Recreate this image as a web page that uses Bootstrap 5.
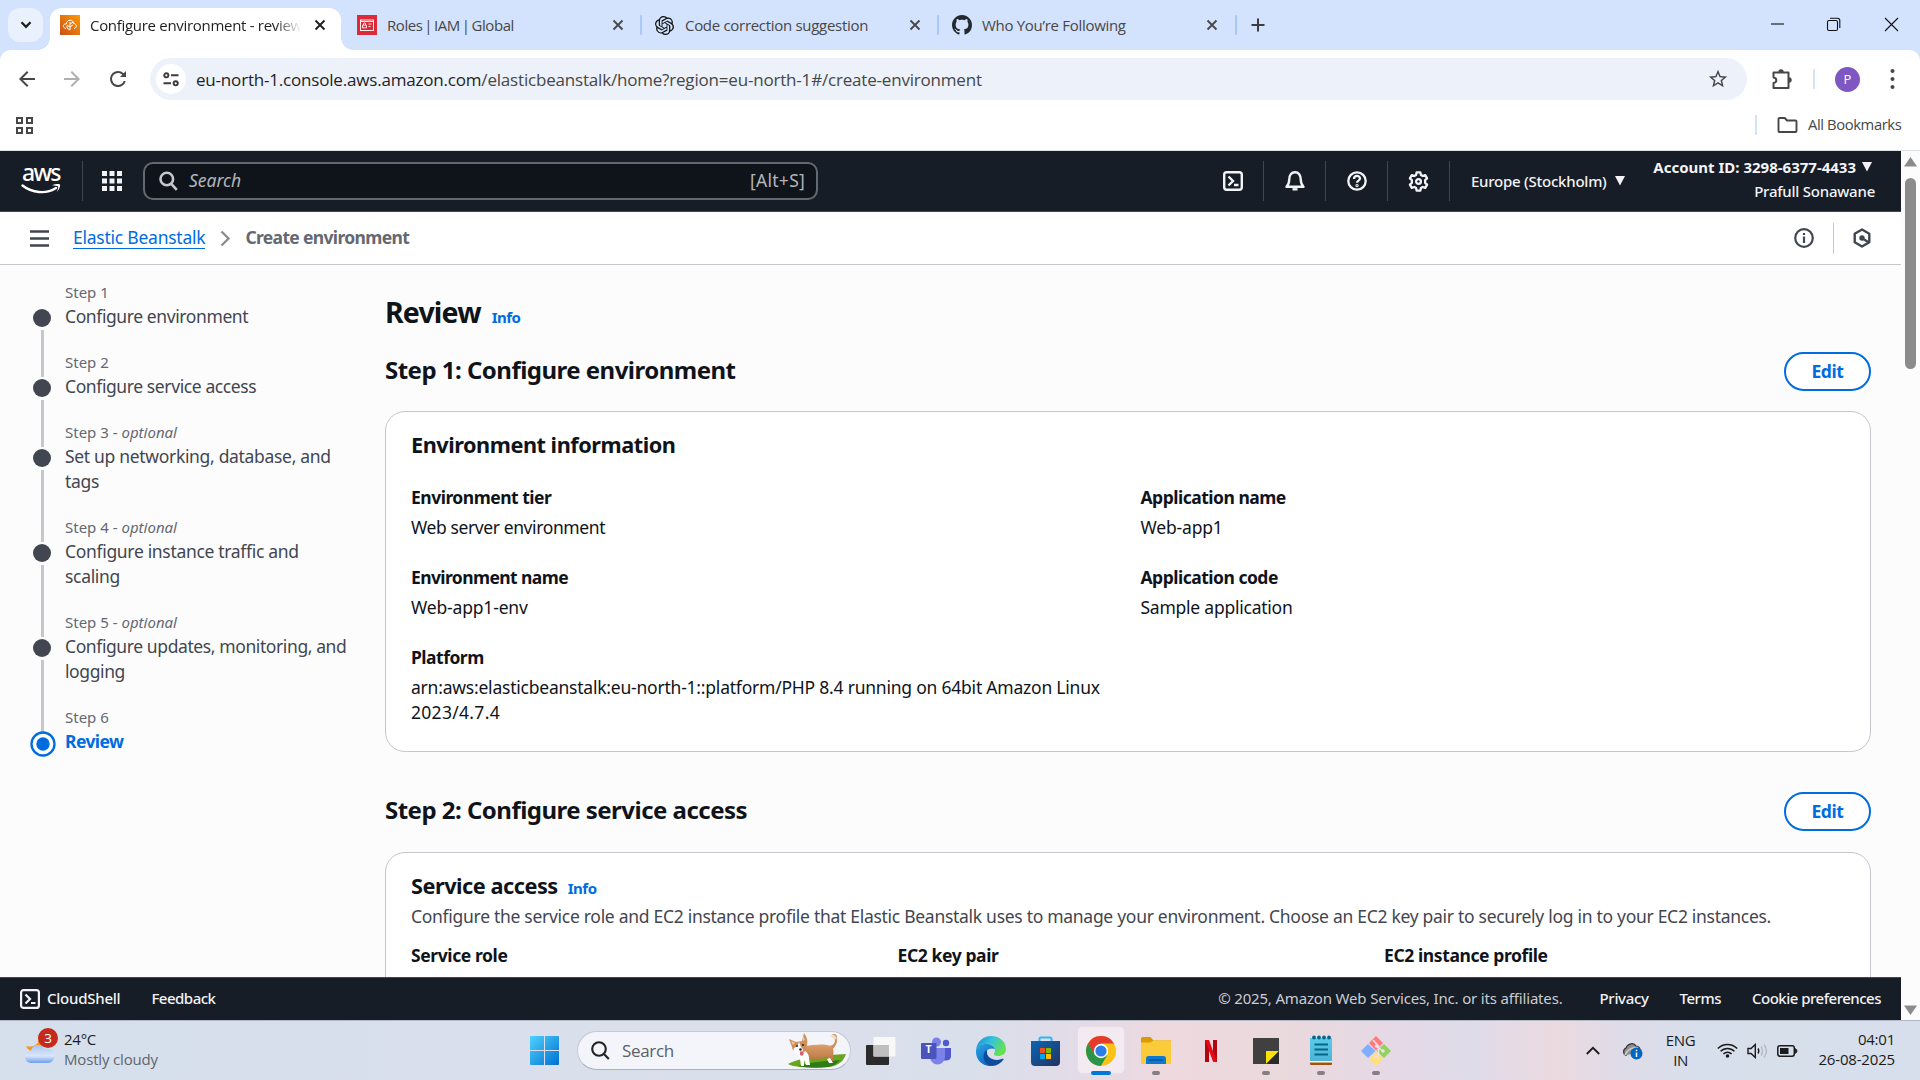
<!DOCTYPE html>
<html lang="en">
<head>
<meta charset="utf-8">
<title>Configure environment - review</title>
<link href="https://cdn.jsdelivr.net/npm/bootstrap@5.3.0/dist/css/bootstrap.min.css" rel="stylesheet">
<style>
html,body{height:1080px;overflow:hidden}
body{font-family:"Noto Sans","Open Sans",sans-serif;font-size:17.5px;line-height:25px;color:#0f141a;background:#fcfcfd;width:1920px}
svg{display:block;flex:none}
.seg{font-family:"Open Sans","Noto Sans",sans-serif;white-space:nowrap}
.nw{white-space:nowrap}
/* tracking steps */
.k1{letter-spacing:-.17px}.k2{letter-spacing:-.24px}.k3{letter-spacing:-.32px}.k4{letter-spacing:-.4px}.k5{letter-spacing:-.5px}.k6{letter-spacing:-.6px}
/* browser chrome */
.tabstrip{height:50px;background:#d3e3fd;flex:none}
.tabsearch{width:35px;height:34px;margin:8px 7px 8px 8px;border-radius:12px;background:#e9f1fe}
.tabitem{height:34px;margin-top:8px;font-size:15px;line-height:34px;color:#474747;flex:none;position:relative;letter-spacing:-.3px}
.tabitem.cur{width:291px;height:42px;background:#fff;border-radius:12px 12px 0 0;color:#1f1f1f;padding-bottom:8px}
.tabitem.cur::before,.tabitem.cur::after{content:"";position:absolute;bottom:0;width:12px;height:12px}
.tabitem.cur::before{left:-12px;background:radial-gradient(circle at 0 0,#d3e3fd 11.5px,#fff 12px)}
.tabitem.cur::after{right:-12px;background:radial-gradient(circle at 100% 0,#d3e3fd 11.5px,#fff 12px)}
.fade-t{width:212px;overflow:hidden;-webkit-mask-image:linear-gradient(90deg,#000 185px,transparent 211px)}
.tsep{width:2px;height:20px;background:#a8c7fa;border-radius:1px;flex:none}
.toolbar{height:50px;background:#fff;border-radius:11px 11px 0 0;flex:none;padding-top:8px}
.toolwrap{background:#d3e3fd;flex:none}
.omni{width:1597px;height:42px;border-radius:21px;background:#ecf1fa;margin-left:20px;padding-left:6px}
.omni .site{width:30px;height:30px;border-radius:50%;background:#fff;flex:none}
.url{font-size:17px;color:#1f1f1f;margin-left:10px;letter-spacing:-.19px}
.url span{color:#474747}
.avatar{width:25px;height:25px;border-radius:50%;background:#7e57c2;color:#fff;font-size:13px;line-height:25px;text-align:center;flex:none}
.bmbar{height:51px;border-bottom:1px solid #dadfe4;background:#fff;flex:none}
.vsep{width:2px;height:20px;background:#d3e3fd;flex:none}
/* page */
.viewport{height:869px;flex:none}
.pagecol{width:1901px}
.awsnav{height:61px;background:#161d26;border-bottom:1px solid #424650;color:#f3f3f7;flex:none}
.nsep{width:1px;height:40px;background:#424650;flex:none}
.awsword{font-size:23px;line-height:18px;height:18px;color:#fff;letter-spacing:-1.7px;font-weight:500}
.searchbox{width:675px;height:38px;border:2px solid #656871;border-radius:10px;background:#0f141a;color:#b4b4bb;margin-left:21px;padding:0 11px 0 14px}
.searchbox span,.searchbox em{padding-bottom:1px}
.nico{width:61px;height:60px;flex:none}
.nav15{font-size:15px;line-height:24px}
.med{font-weight:500}
.crumbs{height:53px;background:#fff;border-bottom:1px solid #c6c6cd;flex:none}
.crumbs a{color:#006ce0;text-decoration:none;border-bottom:1px solid #006ce0;line-height:22px;margin-top:-1px}
.crumbs b{color:#656871;padding-bottom:2px;letter-spacing:-.66px}
.steps{width:385px;padding:18px 0 0 29px}
.stepitem{padding-left:36px;position:relative;padding-bottom:25px;color:#424650}
.stepitem small{display:block;font-size:15px;line-height:20px;color:#656871;margin-top:-1px;margin-bottom:1px}
.stepitem .dot{position:absolute;left:4px;top:27px;width:18px;height:18px;border-radius:50%;background:#424650}
.stepitem .line{position:absolute;left:12px;top:48px;bottom:-24px;width:3px;background:#c6c6cd}
.stepitem .ring{position:absolute;left:.5px;top:23.5px}
.stepitem .ttl{display:block;line-height:25px;padding-top:1px;margin-bottom:-1px}
.review{width:1486px}
.review h1{font-size:28.5px;line-height:36px;font-weight:700;margin:0;letter-spacing:-.85px}
.review h2{font-size:24px;line-height:30px;font-weight:700;margin:0;padding-bottom:3px;letter-spacing:-.52px}
.review h3{font-size:21.7px;line-height:28px;font-weight:700;margin:0;letter-spacing:-.47px}
.info{font-size:15px;font-weight:700;color:#006ce0;text-decoration:none;letter-spacing:-.5px}
.btn-edit{width:87px;height:39px;border:2px solid #006ce0;border-radius:20px;color:#006ce0;font-weight:700;font-size:17.5px;line-height:33px;padding:0;background:#fff;letter-spacing:-.4px}
.box{border:1px solid #c6c6cd;border-radius:20px;background:#fff;padding:19px 25px 25px}
.box dt{line-height:25px;font-weight:700;margin-bottom:5px}
.box dd{line-height:25px;margin-bottom:25px}
.c2{width:729.5px}.c3{width:486.5px}
.awsfoot{height:43px;background:#161d26;border-top:1px solid #424650;color:#f3f3f7;font-size:15px;flex:none}
.awsfoot span{padding-bottom:2px}
.sbar{width:19px;background:#fcfcfc;padding:6px 0 5px;flex:none}
.sthumb{width:11px;height:191px;border-radius:6px;background:#8b8b8b;margin-top:11px}
/* taskbar */
.taskbar{height:60px;border-top:1px solid #b3b8c5;font-size:15px;line-height:20px;color:#1b1b1b;flex:none;
background:linear-gradient(90deg,#d5e0ec 0,#d9dfec 400px,#dadfec 560px,#dbdfec 850px,#d8e0eb 960px,#e3dbe8 1080px,#eed9dd 1170px,#ead9dd 1280px,#e6d9e6 1390px,#dfdcea 1470px,#ebdadf 1555px,#dfdce8 1620px,#d8dfec 1700px,#d6dfeb 1920px)}
.tsearch{width:274px;height:39px;border-radius:20px;background:#f3f5fa;border:1px solid #c3c9d6;border-bottom-color:#a9afc0;font-size:17px;color:#5c5f66;padding-left:13px}
.tk{width:55px;height:59px;flex:none;position:relative}
.tk.on::before{content:"";position:absolute;left:3.5px;top:5px;width:48px;height:48px;border-radius:5px;background:#f3ebf1;border:1px solid #e6dde6}
.tk svg{position:relative}
.tk .run{position:absolute;left:23.5px;bottom:5px;width:8px;height:4px;border-radius:2px;background:#877e85}
.tk .run.wide{width:20px;left:17.5px;background:#0078d4}
.tk .tlet{position:absolute;left:16.5px;top:20px;width:8px;color:#fff;font-size:10.5px;line-height:16px;text-align:center}
.wx{position:relative;width:31px;height:40px;margin:-9px 0 0 24px}
.wx .cnt{position:absolute;left:14px;top:2px;width:20px;height:20px;border-radius:50%;background:#c42b1c;color:#fff;font-size:13.5px;line-height:20px;text-align:center}
</style>
<script src="https://cdn.jsdelivr.net/npm/bootstrap@5.3.0/dist/js/bootstrap.bundle.min.js"></script>
</head>
<body class="d-flex flex-column">

<header class="tabstrip d-flex">
  <div class="tabsearch d-flex align-items-center justify-content-center">
    <svg width="12" height="8" viewBox="0 0 12 8" fill="none" stroke="#1f1f1f" stroke-width="2.3"><path d="M1.5 1.3 6 5.8l4.5-4.5"/></svg>
  </div>
  <div class="tabitem cur seg d-flex align-items-center">
    <svg style="margin:0 10px" width="20" height="20" viewBox="0 0 20 20"><defs><linearGradient id="eb" x1="0" y1="1" x2="1" y2="0"><stop stop-color="#c8511b"/><stop offset="1" stop-color="#f90"/></linearGradient></defs><rect width="20" height="20" fill="url(#eb)"/><g fill="none" stroke="#fff" stroke-width="1"><path d="M6 13.500c-4-.6-3.300-5 .3-4.500.5-5 7-5 7.400-.5 3.600.2 3.300 4.800.3 5"/><path d="M7 10.500v2.500l3 2v-8M13 10l-3 2M10 9l3-1.800M7 10l3 2"/></g></svg>
    <span class="fade-t">Configure environment - review</span>
    <svg style="margin-left:12px" width="12" height="12" viewBox="0 0 12 12" stroke="#1f1f1f" stroke-width="1.900"><path d="M1.500 1.500l9 9M10.500 1.500l-9 9"/></svg>
  </div>
  <div class="tabitem seg d-flex align-items-center" style="width:300px">
    <svg style="margin:0 10px 0 16px" width="20" height="20" viewBox="0 0 20 20"><rect width="20" height="20" fill="#dd2a38"/><g fill="none" stroke="#fff" stroke-width=".9"><rect x="3.500" y="5" width="13" height="10.500"/><path d="M5.500 12.800h4v-2.600h-4zM6.500 10V8.900c0-1.300 2-1.300 2 0V10M11.500 9h3M11.500 11.500h2M3.500 6.500h13"/></g></svg>
    <span style="width:225px;word-spacing:-1.500px;letter-spacing:-.45px">Roles | IAM | Global</span>
    <svg width="12" height="12" viewBox="0 0 12 12" stroke="#474747" stroke-width="1.800"><path d="M1.500 1.500l9 9M10.500 1.500l-9 9"/></svg>
    <i class="tsep ms-auto" style="margin-right:-1px"></i>
  </div>
  <div class="tabitem seg d-flex align-items-center" style="width:299px">
    <svg style="margin:0 11px 0 14px" width="19" height="19" viewBox="0 0 24 24"><path fill="#111" d="M22.2819 9.8211a5.9847 5.9847 0 0 0-.5157-4.9108 6.0462 6.0462 0 0 0-6.5098-2.9A6.0651 6.0651 0 0 0 4.9807 4.1818a5.9847 5.9847 0 0 0-3.9977 2.9 6.0462 6.0462 0 0 0 .7427 7.0966 5.98 5.98 0 0 0 .511 4.9107 6.051 6.051 0 0 0 6.5146 2.9001A5.9847 5.9847 0 0 0 13.2599 24a6.0557 6.0557 0 0 0 5.7718-4.2058 5.9894 5.9894 0 0 0 3.9977-2.9001 6.0557 6.0557 0 0 0-.7475-7.0729zm-9.022 12.6081a4.4755 4.4755 0 0 1-2.8764-1.0408l.1419-.0804 4.7783-2.7582a.7948.7948 0 0 0 .3927-.6813v-6.7369l2.02 1.1686a.071.071 0 0 1 .038.052v5.5826a4.504 4.504 0 0 1-4.4945 4.4944zm-9.6607-4.1254a4.4708 4.4708 0 0 1-.5346-3.0137l.142.0852 4.783 2.7582a.7712.7712 0 0 0 .7806 0l5.8428-3.3685v2.3324a.0804.0804 0 0 1-.0332.0615L9.74 19.9502a4.4992 4.4992 0 0 1-6.1408-1.6464zM2.3408 7.8956a4.485 4.485 0 0 1 2.3655-1.9728V11.6a.7664.7664 0 0 0 .3879.6765l5.8144 3.3543-2.0201 1.1685a.0757.0757 0 0 1-.071 0l-4.8303-2.7865A4.504 4.504 0 0 1 2.3408 7.872zm16.5963 3.8558L13.1038 8.364 15.1192 7.2a.0757.0757 0 0 1 .071 0l4.8303 2.7913a4.4944 4.4944 0 0 1-.6765 8.1042v-5.6772a.79.79 0 0 0-.407-.667zm2.0107-3.0231l-.142-.0852-4.7735-2.7818a.7759.7759 0 0 0-.7854 0L9.409 9.2297V6.8974a.0662.0662 0 0 1 .0284-.0615l4.8303-2.7866a4.4992 4.4992 0 0 1 6.6802 4.66zM8.3065 12.863l-2.02-1.1638a.0804.0804 0 0 1-.038-.0567V6.0742a4.4992 4.4992 0 0 1 7.3757-3.4537l-.142.0805L8.704 5.459a.7948.7948 0 0 0-.3927.6813zm1.0976-2.3654l2.602-1.4998 2.6069 1.4998v2.9994l-2.5974 1.4997-2.6067-1.4997Z"/></svg>
    <span style="width:224px">Code correction suggestion</span>
    <svg width="12" height="12" viewBox="0 0 12 12" stroke="#474747" stroke-width="1.800"><path d="M1.500 1.500l9 9M10.500 1.500l-9 9"/></svg>
    <i class="tsep ms-auto" style="margin-right:1px"></i>
  </div>
  <div class="tabitem seg d-flex align-items-center" style="width:297px">
    <svg style="margin:0 10px 0 12px" width="20" height="20" viewBox="0 0 16 16"><path fill="#24292f" d="M8 0C3.580 0 0 3.580 0 8c0 3.540 2.290 6.530 5.470 7.590.4.070.55-.17.55-.38 0-.19-.01-.82-.01-1.490-2.010.37-2.530-.49-2.690-.94-.09-.23-.48-.94-.82-1.130-.28-.15-.68-.52-.01-.53.63-.01 1.080.58 1.230.82.72 1.210 1.870.87 2.330.66.07-.52.28-.87.51-1.070-1.780-.2-3.640-.89-3.640-3.950 0-.87.31-1.590.82-2.150-.08-.2-.36-1.020.08-2.120 0 0 .67-.21 2.200.82.64-.18 1.320-.27 2-.27.68 0 1.360.09 2 .27 1.530-1.040 2.200-.82 2.200-.82.44 1.100.16 1.920.08 2.120.51.56.82 1.270.82 2.150 0 3.070-1.870 3.750-3.650 3.950.29.25.54.73.54 1.480 0 1.070-.01 1.930-.01 2.200 0 .21.15.46.55.38A8.010 8.010 0 0 0 16 8c0-4.420-3.580-8-8-8z"/></svg>
    <span style="width:224px">Who You’re Following</span>
    <svg width="12" height="12" viewBox="0 0 12 12" stroke="#474747" stroke-width="1.800"><path d="M1.500 1.500l9 9M10.500 1.500l-9 9"/></svg>
    <i class="tsep ms-auto"></i>
  </div>
  <svg style="margin:18px 0 0 14px" width="14" height="14" viewBox="0 0 14 14" stroke="#3c3c3c" stroke-width="2"><path d="M7 .5v13M.5 7h13"/></svg>
  <svg class="ms-auto" style="margin:17px 21px 0 0" width="128" height="15" viewBox="0 0 128 15" fill="none" stroke="#111" stroke-width="1.100"><path d="M0 7h13"/><rect x="56.500" y="3.500" width="10" height="10" rx="1.500"/><path d="M59 1.300h7.500a2.300 2.300 0 0 1 2.300 2.300V11"/><path d="M114 1l13 13M127 1l-13 13"/></svg>
</header>

<div class="toolwrap"><div class="toolbar d-flex align-items-center">
  <svg style="margin-left:15px" width="24" height="24" viewBox="0 0 24 24" fill="#474747"><path d="M20 11H7.830l5.590-5.590L12 4l-8 8 8 8 1.410-1.410L7.830 13H20v-2z"/></svg>
  <svg style="margin-left:21px" width="24" height="24" viewBox="0 0 24 24" fill="#b0b0b0"><path d="M4 11h12.170l-5.590-5.590L12 4l8 8-8 8-1.410-1.410L16.170 13H4v-2z"/></svg>
  <svg style="margin-left:22px" width="24" height="24" viewBox="0 0 24 24" fill="#474747"><path d="M17.650 6.350A7.958 7.958 0 0 0 12 4a8 8 0 1 0 7.730 10h-2.080A6 6 0 1 1 12 6c1.660 0 3.140.69 4.220 1.780L14 10h6V4l-2.350 2.350z"/></svg>
  <div class="omni d-flex align-items-center seg">
    <div class="site d-flex align-items-center justify-content-center"><svg width="16" height="15" viewBox="0 0 16 15" fill="none" stroke="#3c3c3c" stroke-width="1.900"><circle cx="3.300" cy="3.300" r="2.100"/><path d="M8 3.300h7.500M.5 11.300H8"/><circle cx="12.700" cy="11.300" r="2.100"/></svg></div>
    <div class="url">eu-north-1.console.aws.amazon.com<span>/elasticbeanstalk/home?region=eu-north-1#/create-environment</span></div>
    <svg class="ms-auto" style="margin-right:18px" width="22" height="22" viewBox="0 0 24 24" fill="#474747"><path d="M22 9.240l-7.190-.62L12 2 9.190 8.630 2 9.240l5.460 4.730L5.820 21 12 17.270 18.180 21l-1.630-7.030L22 9.240zM12 15.400l-3.760 2.270 1-4.280-3.320-2.880 4.380-.38L12 6.100l1.710 4.040 4.380.38-3.320 2.880 1 4.280L12 15.400z"/></svg>
  </div>
  <svg style="margin-left:24px" width="22" height="22" viewBox="0 0 22 22"><path fill="none" stroke="#474747" stroke-width="2" stroke-linejoin="round" d="M2.500 4.500h15v15.500h-15v-5c3.800-.5 3.800-5 0-5.500z"/><path fill="#474747" d="M7.300 4a2.700 2.700 0 0 1 5.400 0zM18 9.300a2.700 2.700 0 0 1 0 5.400z"/></svg>
  <i class="vsep" style="margin-left:20px"></i>
  <div class="avatar seg" style="margin-left:20px">P</div>
  <svg style="margin-left:30px" width="5" height="22" viewBox="0 0 5 22" fill="#474747"><circle cx="2.500" cy="3" r="2"/><circle cx="2.500" cy="11" r="2"/><circle cx="2.500" cy="19" r="2"/></svg>
</div></div>

<div class="bmbar d-flex align-items-center seg">
  <svg style="margin-left:15px" width="19" height="19" viewBox="0 0 19 19" fill="none" stroke="#474747" stroke-width="2"><path d="M2 2h5v5H2zM12 2h5v5h-5zM2 12h5v5H2zM12 12h5v5h-5z"/></svg>
  <i class="vsep ms-auto"></i>
  <svg style="margin-left:20px" width="21" height="18" viewBox="0 0 21 18" fill="none" stroke="#474747" stroke-width="1.900"><path d="M1.500 3a1 1 0 0 1 1-1h5.300l2.200 2.500h8.500a1 1 0 0 1 1 1V15a1 1 0 0 1-1 1h-16a1 1 0 0 1-1-1z"/></svg>
  <span class="k4" style="font-size:14.800px;color:#474747;margin-left:10px;width:112px;padding-bottom:2px">All Bookmarks</span>
</div>

<div class="viewport d-flex">
 <div class="pagecol d-flex flex-column">
  <nav class="awsnav d-flex align-items-center">
    <div style="width:82px;padding:0 0 4px 22px">
      <div class="awsword">aws</div>
      <svg style="margin:2px 0 0 -1px" width="40" height="12" viewBox="0 0 40 12"><path d="M1.500 2.500C11 10 25 11.500 35 5" fill="none" stroke="#fff" stroke-width="2.400" stroke-linecap="round"/><path d="M31 2.200c3-1.400 7.500-1.500 8-.7s-.5 5-3 7.300c.8-2.500 1.600-4.600 1-5.400s-3.500-.8-6-1.200z" fill="#fff"/></svg>
    </div>
    <i class="nsep"></i>
    <svg style="margin-left:19px" width="20" height="20" viewBox="0 0 20 20" fill="#f3f3f7"><path d="M0 0h5v5H0zM7.500 0h5v5h-5zM15 0h5v5h-5zM0 7.500h5v5H0zM7.500 7.500h5v5h-5zM15 7.500h5v5h-5zM0 15h5v5H0zM7.500 15h5v5h-5zM15 15h5v5h-5z"/></svg>
    <div class="searchbox d-flex align-items-center nw">
      <svg width="19" height="20" viewBox="0 0 19 20" fill="none" stroke="#c6c6cd" stroke-width="2.600"><circle cx="7.800" cy="8" r="6.300"/><path d="M12.300 12.800l5.500 6"/></svg>
      <em style="margin-left:11px">Search</em>
      <span class="ms-auto" style="letter-spacing:.25px">[Alt+S]</span>
    </div>
    <div class="d-flex align-items-center ms-auto">
      <div class="nico d-flex align-items-center justify-content-center"><svg width="20" height="20" viewBox="0 0 20 20" fill="none" stroke="#f3f3f7" stroke-width="2.400"><rect x="1.200" y="1.200" width="17.600" height="17.600" rx="2.500"/><path d="M5.500 5.500L10 10l-4.500 4.500M11 14h4.500"/></svg></div>
      <i class="nsep"></i>
      <div class="nico d-flex align-items-center justify-content-center"><svg width="20" height="20" viewBox="0 0 20 20" fill="none" stroke="#f3f3f7" stroke-width="2.400" stroke-linejoin="round"><path d="M1.500 15.800h17c-2-2-2.700-3.300-2.700-7C15.800 4 13.500 1.300 10 1.300S4.200 4 4.200 8.800c0 3.700-.7 5-2.700 7z"/><path d="M7.500 18.300h5"/></svg></div>
      <i class="nsep"></i>
      <div class="nico d-flex align-items-center justify-content-center"><svg width="20" height="20" viewBox="0 0 20 20" fill="none" stroke="#f3f3f7" stroke-width="2.300"><circle cx="10" cy="10" r="8.700"/><path d="M7 8c0-4 6-4 6-.5 0 2.200-3 2-3 4.300"/><circle cx="10" cy="14.600" r=".5"/></svg></div>
      <i class="nsep"></i>
      <div class="nico d-flex align-items-center justify-content-center"><svg width="21" height="21" viewBox="0 0 20 20" fill="none" stroke="#f3f3f7" stroke-width="2.200" stroke-linejoin="round"><path d="M8.200 1.300h3.600l.5 2.500 1.700 1 2.400-.9 1.800 3.100-1.900 1.700v2.600l1.900 1.700-1.800 3.100-2.400-.9-1.700 1-.5 2.500H8.200l-.5-2.500-1.700-1-2.400.9-1.800-3.100 1.900-1.700V8.700L1.800 7l1.800-3.100 2.400.9 1.700-1z"/><circle cx="10" cy="10" r="2.300"/></svg></div>
      <i class="nsep"></i>
      <div class="nav15 d-flex align-items-center nw med" style="margin-left:21px;width:157px"><span class="k2">Europe (Stockholm)</span><svg style="margin-left:8px" width="10" height="10" viewBox="0 0 10 10" fill="#f3f3f7"><path d="M0 0h10L5 9.500z"/></svg></div>
      <div class="text-end nav15 nw" style="width:247px;margin:-4px 26px 0 0">
        <div class="d-flex align-items-center justify-content-end fw-bold" style="margin-right:3px"><span>Account ID: 3298-6377-4433</span><svg style="margin-left:6px" width="10" height="10" viewBox="0 0 10 10" fill="#f3f3f7"><path d="M0 0h10L5 9.500z"/></svg></div>
        <div class="med k2">Prafull Sonawane</div>
      </div>
    </div>
  </nav>
  <div class="crumbs d-flex align-items-center nw">
    <svg style="margin-left:30px" width="19" height="17" viewBox="0 0 19 17" stroke="#424650" stroke-width="2.400"><path d="M0 1.500h19M0 8.500h19M0 15.500h19"/></svg>
    <a class="k2" href="#" style="margin-left:24px">Elastic Beanstalk</a>
    <svg style="margin-left:15px" width="11" height="17" viewBox="0 0 11 17" fill="none" stroke="#8c8c94" stroke-width="2.400"><path d="M1.500 1.500l7 7-7 7"/></svg>
    <b style="margin-left:14px">Create environment</b>
    <svg class="ms-auto" width="20" height="20" viewBox="0 0 20 20" fill="none" stroke="#424650" stroke-width="2.200"><circle cx="10" cy="10" r="8.800"/><path d="M10 8.500V15M10 5v2"/></svg>
    <i style="width:1px;height:31px;background:#c6c6cd;margin:0 19px"></i>
    <svg style="margin-right:30px" width="18" height="20" viewBox="0 0 18 20" fill="none" stroke="#424650" stroke-width="2.400" stroke-linejoin="round"><path d="M9 1.500l7.300 4.200v8.600L9 18.500l-7.300-4.200V5.700z"/><circle cx="9" cy="10" r="2.700" fill="#424650" stroke="none"/><path d="M9.500 10.500l6.500 4"/></svg>
  </div>
  <main class="d-flex flex-grow-1 overflow-hidden" style="min-height:0">
    <aside class="steps nw">
      <div class="stepitem"><i class="line"></i><i class="dot"></i><small>Step 1</small><span class="ttl k4">Configure environment</span></div>
      <div class="stepitem"><i class="line"></i><i class="dot"></i><small>Step 2</small><span class="ttl k4">Configure service access</span></div>
      <div class="stepitem"><i class="line"></i><i class="dot"></i><small>Step 3 - <em>optional</em></small><span class="ttl k3">Set up networking, database, and<br>tags</span></div>
      <div class="stepitem"><i class="line"></i><i class="dot"></i><small>Step 4 - <em>optional</em></small><span class="ttl k3">Configure instance traffic and<br>scaling</span></div>
      <div class="stepitem"><i class="line"></i><i class="dot"></i><small>Step 5 - <em>optional</em></small><span class="ttl k4">Configure updates, monitoring, and<br>logging</span></div>
      <div class="stepitem"><svg class="ring" width="26" height="26" viewBox="0 0 26 26"><circle cx="13" cy="13" r="11.500" fill="#fff" stroke="#006ce0" stroke-width="2.300"/><circle cx="13" cy="13" r="6.700" fill="#006ce0"/></svg><small>Step 6</small><span class="ttl fw-bold k6" style="color:#006ce0">Review</span></div>
    </aside>
    <section class="review nw">
      <div class="d-flex align-items-baseline" style="margin-top:29px;height:36px"><h1>Review</h1><a class="info" href="#" style="margin-left:11px">Info</a></div>
      <div class="d-flex justify-content-between align-items-center" style="margin-top:22px"><h2>Step 1: Configure environment</h2><button class="btn btn-edit">Edit</button></div>
      <div class="box" style="margin-top:20px;height:341px">
        <h3 style="margin-bottom:26px">Environment information</h3>
        <div class="d-flex">
          <dl class="c2 mb-0">
            <dt class="k5">Environment tier</dt><dd class="k4">Web server environment</dd>
            <dt class="k6">Environment name</dt><dd class="k1">Web-app1-env</dd>
            <dt class="k5">Platform</dt><dd class="mb-0"><span style="letter-spacing:-.22px">arn:aws:elasticbeanstalk:eu-north-1::platform/PHP 8.4 running on 64bit Amazon Linux</span><br><span style="letter-spacing:.3px">2023/4.7.4</span></dd>
          </dl>
          <dl class="mb-0">
            <dt class="k5">Application name</dt><dd class="k1">Web-app1</dd>
            <dt class="k5">Application code</dt><dd class="k2">Sample application</dd>
          </dl>
        </div>
      </div>
      <div class="d-flex justify-content-between align-items-center" style="margin-top:40px"><h2>Step 2: Configure service access</h2><button class="btn btn-edit">Edit</button></div>
      <div class="box" style="margin-top:21px;height:300px">
        <div class="d-flex align-items-baseline" style="height:30px"><h3>Service access</h3><a class="info" href="#" style="margin-left:10px">Info</a></div>
        <div style="color:#424650;margin:2px 0 14px;letter-spacing:-.29px">Configure the service role and EC2 instance profile that Elastic Beanstalk uses to manage your environment. Choose an EC2 key pair to securely log in to your EC2 instances.</div>
        <dl class="d-flex mb-0 k4"><dt class="c3">Service role</dt><dt class="c3">EC2 key pair</dt><dt>EC2 instance profile</dt></dl>
      </div>
    </section>
  </main>
  <footer class="awsfoot d-flex align-items-center nw">
    <svg style="margin-left:20px" width="20" height="20" viewBox="0 0 20 20" fill="none" stroke="#f3f3f7" stroke-width="2.200"><rect x="1.100" y="1.100" width="17.800" height="17.800" rx="2.500"/><path d="M5.500 5.500L10 10l-4.500 4.500M11 14h4.500"/></svg>
    <span class="med k2" style="margin-left:7px">CloudShell</span>
    <span class="med k5" style="margin-left:31px">Feedback</span>
    <span class="ms-auto k1" style="color:#ccccd1">© 2025, Amazon Web Services, Inc. or its affiliates.</span>
    <span class="med k3" style="margin-left:37px">Privacy</span>
    <span class="med k5" style="margin-left:31px">Terms</span>
    <span class="med k5" style="margin-left:31px;margin-right:20px">Cookie preferences</span>
  </footer>
 </div>
 <div class="sbar d-flex flex-column align-items-center">
   <svg width="13" height="10" viewBox="0 0 13 10" fill="#8b8b8b"><path d="M6.500 0L13 9.500H0z"/></svg>
   <i class="sthumb"></i>
   <svg class="mt-auto" width="13" height="10" viewBox="0 0 13 10" fill="#8b8b8b"><path d="M6.500 10L0 .5h13z"/></svg>
 </div>
</div>

<footer class="taskbar d-flex align-items-center seg">
  <div class="wx">
    <svg width="33" height="40" viewBox="0 0 33 40"><defs><linearGradient id="cl" x1="0" y1="0" x2="0" y2="1"><stop stop-color="#a9c4f3"/><stop offset=".6" stop-color="#d9e6fb"/><stop offset="1" stop-color="#6f9de8"/></linearGradient></defs><path fill="#f39a1e" d="M13 9c5 5-1 14-11 11 2 6 10 7 15 1s1-11-4-12z"/><path fill="url(#cl)" d="M7 37a6 6 0 0 1 0-12c1.500-7 11-8 13.500-2 6-1.500 10 2 10 7 0 4-3 7-6.500 7z"/></svg>
    <span class="cnt">3</span>
  </div>
  <div style="margin:-4px 0 0 9px;width:466px"><span class="k2">24°C</span><br><span class="k1" style="color:#5f646d">Mostly cloudy</span></div>
  <svg width="29" height="29" viewBox="0 0 29 29"><defs><linearGradient id="w" x1="0" y1="0" x2="1" y2="1"><stop stop-color="#4fd2ff"/><stop offset="1" stop-color="#0070d0"/></linearGradient></defs><path fill="url(#w)" d="M1 0h13v14H0V1a1 1 0 0 1 1-1zM15 0h13a1 1 0 0 1 1 1v13H15zM0 15h14v14H1a1 1 0 0 1-1-1zM15 15h14v13a1 1 0 0 1-1 1H15z"/></svg>
  <div class="tsearch d-flex align-items-center" style="margin-left:18px">
    <svg width="19" height="19" viewBox="0 0 19 19" fill="none" stroke="#222" stroke-width="2.100"><circle cx="8" cy="8" r="6.800"/><path d="M12.500 12.500l5.300 5.500"/></svg>
    <span class="k3" style="margin-left:12px">Search</span>
    <svg class="ms-auto" style="margin-right:3px" width="59" height="36" viewBox="0 0 59 36"><defs><linearGradient id="cg" x1="0" y1="0" x2="0" y2="1"><stop stop-color="#dca06b"/><stop offset="1" stop-color="#b87340"/></linearGradient></defs><path fill="#6aa51f" d="M0 31c9-6 38-9 58-10-2 7-8 12-17 13-14 1-34 1-41-3z"/><path fill="#2f7c16" d="M10 33c12-4 28-5 42-6-3 4-7 6-12 7-10 1-22 1-30-1z"/><path d="M40 13c7 0 8-5 6-9l-3-1.500c3-3 6-1.500 6 2 1 5-2 11-7 13z" fill="#cf925f"/><path fill="#f3dcc6" d="M42 2.500c3-2 6 0 7 4l-3-1z"/><path fill="url(#cg)" d="M17 13c8-1 18-3 25 0 4 2 4 6 3 10l1 5h-4l-3-4c-5 2-10 2-15 2l-5-2c-4-2-5-7-2-11z"/><path fill="#fff" d="M13 17c5 0 8 4 8 8l1 7h-4l-2-5v6h-3l-1-7c-2-3-2-6 1-9z"/><path fill="#fff" d="M39 26l3-1 3 5h-4z"/><path fill="#cf8f5b" d="M1 6l7 3 6-1 2-8c3 4 4 8 3 12 0 5-3 8-6 8S4 18 4 14z"/><path fill="#f2c9a8" d="M3 8l4 2-2 2zM15 3l2 4-2 1z"/><path fill="#fff" d="M11 9l2 5c4 3 1 7-2 7-4 0-6-3-5-6 3-1 4-3 5-6z"/><circle cx="9" cy="13" r="1" fill="#222"/><circle cx="15" cy="12" r="1" fill="#222"/><circle cx="12.500" cy="16.500" r="1.300" fill="#222"/><path fill="#e2566a" d="M12 18.500h3.500V21a1.700 1.700 0 0 1-3.500 0z"/></svg>
  </div>
  <div class="d-flex" style="margin-left:2px">
    <div class="tk d-flex align-items-center justify-content-center"><svg width="30" height="28" viewBox="0 0 30 28"><rect y="8" width="23" height="20" rx="1" fill="#2b2b2b"/><rect x="7.500" width="22" height="19.500" rx="1" fill="#f8f8f8"/><path fill="#bfbfbf" d="M7.500 8H23v11.500H7.500z"/></svg></div>
    <div class="tk d-flex align-items-center justify-content-center"><svg width="30" height="28" viewBox="0 0 30 28"><circle cx="15.500" cy="5" r="4.500" fill="#7b83eb"/><circle cx="25" cy="6" r="3.200" fill="#5059c9"/><path fill="#5059c9" d="M22 11h8v8c0 3-2 4.500-5 4.500h-3z"/><path fill="#7b83eb" d="M9 11h15v9a7.500 7.500 0 0 1-15 0z"/><rect y="6" width="15.500" height="16" rx="1" fill="#4b53bc"/></svg><b class="tlet">T</b></div>
    <div class="tk d-flex align-items-center justify-content-center"><svg width="30" height="30" viewBox="0 0 30 30"><defs><linearGradient id="e1" x1="0" y1="0" x2="1" y2=".5"><stop offset=".1" stop-color="#1b8fdc"/><stop offset=".5" stop-color="#33c3d8"/><stop offset="1" stop-color="#66e24e"/></linearGradient><linearGradient id="e2" x1="0" y1="0" x2=".6" y2="1"><stop stop-color="#2aa7e0"/><stop offset="1" stop-color="#0b63c9"/></linearGradient></defs><path fill="url(#e1)" d="M0 14C1 5 8 0 15 0c9 0 15 6 15 13 0 5-4 7-8 7-3 0-4-1-4-2s1-1 1-4c0-4-4-6-8-6C6 8 1 10 0 14z"/><path fill="url(#e2)" d="M0 14c1-4 5-6 10-6 5 0 8 2 9 5-6-2-10 2-10 7s3 9 8 10C7 31-1 24 0 14z"/><path fill="#0f4c9c" d="M10 14c-5 6-2 15 6 16 5 0 9-3 11.500-6.500.5-.8-.3-1-1-.7C19 26 10 22 11 15z"/></svg></div>
    <div class="tk d-flex align-items-center justify-content-center"><svg width="29" height="30" viewBox="0 0 29 30"><defs><linearGradient id="st" x1="0" y1="0" x2="1" y2="1"><stop stop-color="#0a66b5"/><stop offset="1" stop-color="#24335f"/></linearGradient></defs><path d="M8.500 7V3a1.500 1.500 0 0 1 1.500-1.500h9A1.500 1.500 0 0 1 20.500 3v4" fill="none" stroke="#2fb8f5" stroke-width="2"/><path fill="url(#st)" d="M0 5h29v21a4 4 0 0 1-4 4H4a4 4 0 0 1-4-4z"/><path fill="#f25022" d="M9 12h5v5H9z"/><path fill="#7fba00" d="M15 12h5v5h-5z"/><path fill="#00a4ef" d="M9 18h5v5H9z"/><path fill="#ffb900" d="M15 18h5v5h-5z"/></svg></div>
    <div class="tk on d-flex align-items-center justify-content-center"><svg width="30" height="30" viewBox="0 0 30 30"><circle cx="15" cy="15" r="15" fill="#fbc116"/><path fill="#e33b2e" d="M2 7.500A15 15 0 0 1 28 7.500H15v7z"/><path fill="#2a9447" d="M2 7.500A15 15 0 0 0 14.800 30L21.500 18.800 9 18.800z"/><path fill="#e33b2e" d="M2 7.500L8.500 18.500 15 10z"/><path fill="#2a9447" d="M2 7.500L8.600 18.700 5 22z"/><circle cx="15" cy="15" r="7.200" fill="#fff"/><circle cx="15" cy="15" r="5.600" fill="#2b7de9"/></svg><i class="run wide"></i></div>
    <div class="tk d-flex align-items-center justify-content-center"><svg width="30" height="27" viewBox="0 0 30 27"><path fill="#d99b00" d="M0 1.500A1.500 1.500 0 0 1 1.500 0h8l3 3.500H30V10H0z"/><path fill="#fccb3a" d="M0 5.500h9.500l3-2H29a1 1 0 0 1 1 1V27H0z"/><path fill="#0f79cf" d="M5 27v-5.500A2.500 2.500 0 0 1 7.500 19h15a2.500 2.500 0 0 1 2.500 2.500V27z"/><path d="M8.500 23h13" stroke="#0a4d94" stroke-width="1.300"/></svg><i class="run"></i></div>
    <div class="tk d-flex align-items-center justify-content-center"><svg width="12" height="22" viewBox="0 0 12 22"><path fill="#b1060f" d="M0 0h4v22l-4 .5zM8 0h4v22l-4-.5z"/><path fill="#e50914" d="M0 0h4l8 22-4-.5z"/></svg></div>
    <div class="tk d-flex align-items-center justify-content-center"><svg width="26" height="26" viewBox="0 0 26 26"><path fill="#404040" d="M0 0h26v13L13 26H0z"/><path fill="#fde100" d="M13 13h13L13 26z"/><path fill="#2a2a2a" d="M26 13v13H13z"/></svg><i class="run"></i></div>
    <div class="tk d-flex align-items-center justify-content-center"><svg width="22" height="31" viewBox="0 0 22 31"><defs><linearGradient id="np" x1="0" y1="0" x2="0" y2="1"><stop stop-color="#5bcbe9"/><stop offset="1" stop-color="#4db4d6"/></linearGradient></defs><path fill="#a4530f" d="M0 27h22v2a1 1 0 0 1-1 1H1a1 1 0 0 1-1-1z"/><path fill="#fff" d="M0 25h22v2.500H0z"/><path fill="url(#np)" d="M0 3h22v23H0z"/><path d="M4.500 9.500h13.500M4.500 14.500h13.500M4.500 19.500h13.500" stroke="#05668a" stroke-width="1.900"/><g fill="#05668a"><circle cx="4" cy="2.500" r="1.900"/><circle cx="9" cy="2.500" r="1.900"/><circle cx="14" cy="2.500" r="1.900"/><circle cx="19" cy="2.500" r="1.900"/></g></svg><i class="run"></i></div>
    <div class="tk d-flex align-items-center justify-content-center"><svg width="30" height="30" viewBox="0 0 30 30"><path fill="#ff7b7b" d="M15 0l7 7-7 7.500L8 7z"/><path fill="#8fd35c" d="M23 8l7 7-7 7-7.500-7z"/><path fill="#ffe07d" d="M15 16l7 7-7 7-7-7z"/><path fill="#7fb0ff" d="M7 8l7.500 7L7 22l-7-7z"/><path d="M12 4l5.500 6v10M15 10l7 5" fill="none" stroke="#f1e0ea" stroke-width="1.500"/><circle cx="15.500" cy="10" r="1.800" fill="#f1e0ea"/><circle cx="22" cy="15" r="1.800" fill="#f1e0ea"/><circle cx="15" cy="20.500" r="1.800" fill="#f1e0ea"/></svg><i class="run"></i></div>
  </div>
  <div class="d-flex align-items-center ms-auto" style="margin-right:25px">
    <svg width="14" height="9" viewBox="0 0 14 9" fill="none" stroke="#1b1b1b" stroke-width="1.800"><path d="M.8 8L7 1.800 13.200 8"/></svg>
    <svg style="margin-left:22px" width="21" height="18" viewBox="0 0 21 18"><path fill="#8c8c8c" stroke="#333" stroke-width="1.200" d="M4.500 13.500a4 4 0 0 1-.5-7.500C6 1 12 .5 14 4c2.500.3 4 2 4 4"/><path d="M3 13c2-5 7-8 13-7" stroke="#c9c9c9" stroke-width="2" fill="none"/><circle cx="14.500" cy="11.500" r="6" fill="#0067c0"/><path d="M14.500 10.500V15M14.500 7.800v1.500" stroke="#fff" stroke-width="1.500"/></svg>
    <div class="text-center k4" style="margin:-2px 0 0 16px;width:43px">ENG<br>IN</div>
    <svg style="margin-left:15px" width="21" height="15" viewBox="0 0 21 15" fill="none" stroke="#1b1b1b" stroke-width="1.500"><path d="M.8 5.500a13.500 13.500 0 0 1 19.400 0M3.600 8.300a9.700 9.700 0 0 1 13.800 0M6.400 11a5.700 5.700 0 0 1 8.200 0"/><circle cx="10.500" cy="13" r="1.800" fill="#1b1b1b" stroke="none"/></svg>
    <svg style="margin-left:9px" width="21" height="16" viewBox="0 0 21 16" fill="none" stroke="#1b1b1b" stroke-width="1.400"><path d="M1 5.500h3l4.300-4v13L4 10.500H1z"/><path d="M11 5.500c1 1.500 1 3.500 0 5"/><path d="M14 3.500c2 2.500 2 6.500 0 9M17 1.500c3 4 3 9 0 13" stroke="#b5bac4"/></svg>
    <svg style="margin-left:9px" width="21" height="12" viewBox="0 0 21 12"><rect x=".8" y=".8" width="16.500" height="10.400" rx="2.200" fill="none" stroke="#1b1b1b" stroke-width="1.500"/><rect x="3" y="3" width="8.500" height="6" fill="#1b1b1b"/><path d="M18.300 3.800c2 0 2.200 4.400 0 4.400z" fill="#1b1b1b" stroke="#1b1b1b"/></svg>
    <div class="text-end" style="width:97px;margin-top:-4px"><span class="k2">04:01</span><br><span class="k1">26-08-2025</span></div>
  </div>
</footer>
</body>
</html>
